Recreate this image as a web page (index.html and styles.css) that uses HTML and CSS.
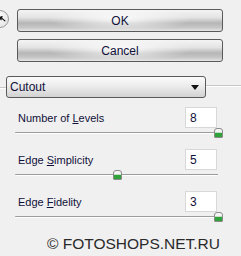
FILE: index.html
```html
<!DOCTYPE html>
<html lang="en">
<head>
  <meta charset="UTF-8">
  <title>Cutout</title>
  <link rel="stylesheet" href="styles.css">
</head>
<body>
  <div class="panel">
    <div class="collapse">
      <svg width="16" height="16" viewBox="0 0 16 16">
        <path d="M3 6 L7 4 L6 5 M3 6 L5 9 M4 5 L11 11" fill="none" stroke="#111" stroke-width="2" stroke-linecap="round"/>
      </svg>
    </div>

    <div class="buttons">
      <button class="btn">OK</button>
      <button class="btn">Cancel</button>
    </div>

    <div class="preset">
      <span class="rule short"></span>
      <div class="select">
        <span>Cutout</span>
        <span class="arrow"></span>
      </div>
      <span class="rule"></span>
    </div>

    <div class="param">
      <div class="param-row">
        <label>Number of <u>L</u>evels</label>
        <input class="field" type="text" value="8">
      </div>
      <div class="slider"><span class="track"></span><span class="thumb" style="left: 100%"></span></div>
    </div>

    <div class="param">
      <div class="param-row">
        <label>Edge <u>S</u>implicity</label>
        <input class="field" type="text" value="5">
      </div>
      <div class="slider"><span class="track"></span><span class="thumb" style="left: 50%"></span></div>
    </div>

    <div class="param">
      <div class="param-row">
        <label>Edge <u>F</u>idelity</label>
        <input class="field" type="text" value="3">
      </div>
      <div class="slider"><span class="track"></span><span class="thumb" style="left: 100%"></span></div>
    </div>

    <div class="watermark">© FOTOSHOPS.NET.RU</div>
  </div>
</body>
</html>
```

FILE: styles.css
```css
/* filter gallery side panel */
body {
  margin: 0;
  background: #f0f0f0;
  font-family: 'Liberation Sans', Arial, sans-serif;
  font-size: 12px;
  color: #10103a;
  width: 241px;
  height: 256px;
  overflow: hidden;
}

.panel {
  position: relative;
  padding-top: 9px;
}

.collapse {
  position: absolute;
  left: -9px;
  top: 10px;
  width: 16px;
  height: 16px;
  border: 1px solid #9a9a9a;
  border-radius: 50%;
  background: radial-gradient(circle at 40% 35%, #ffffff, #dedede);
  display: flex;
  align-items: center;
  justify-content: flex-end;
}

.collapse svg {
  width: 10px;
  height: 10px;
}

.buttons {
  display: flex;
  flex-direction: column;
  gap: 7px;
  margin-left: 17px;
  width: 206px;
}

.btn {
  height: 23px;
  border: 1px solid #5a5a5a;
  border-radius: 3px;
  font-family: 'Liberation Sans', Arial, sans-serif;
  font-size: 12px;
  color: #10103a;
  padding: 0;
  background:
    radial-gradient(ellipse 35% 60% at 50% 45%, rgba(255, 255, 255, 0.85), rgba(255, 255, 255, 0)),
    linear-gradient(#f4f4f4 0%, #e4e4e4 35%, #b6b6b6 62%, #c8c8c8 85%, #e6e6e6 100%);
}

.preset {
  display: flex;
  align-items: center;
  margin-top: 14px;
}

.rule {
  flex: 1;
  height: 1px;
  background: #c8c8c8;
  border-bottom: 1px solid #ffffff;
  margin-top: -2px;
}

.rule.short {
  flex: 0 0 6px;
  margin-top: 2px;
}

.select {
  width: 200px;
  height: 22px;
  border: 1px solid #5a5a5a;
  border-radius: 3px;
  display: flex;
  align-items: center;
  justify-content: space-between;
  padding: 0 6px 0 3px;
  box-sizing: border-box;
  background: linear-gradient(#fbfbfb 0%, #ececec 45%, #d2d2d2 100%);
}

.arrow {
  width: 0;
  height: 0;
  border-left: 4px solid transparent;
  border-right: 4px solid transparent;
  border-top: 5px solid #111;
}

.param {
  margin: 9px 24px 0 15px;
}

.param + .param {
  margin-top: 11px;
}

.param-row {
  display: flex;
  align-items: center;
  justify-content: space-between;
  padding-left: 3px;
}

.param-row label {
  font-size: 11px;
}

.field {
  width: 32px;
  height: 21px;
  box-sizing: border-box;
  border: 1px solid #d8d8d8;
  background: #fff;
  font-family: 'Liberation Sans', Arial, sans-serif;
  font-size: 12px;
  color: #10103a;
  padding: 0 4px;
}

.slider {
  position: relative;
  height: 10px;
  margin-right: -1px;
}

.track {
  display: block;
  position: relative;
  top: 4px;
  height: 1px;
  background: #9c9c9c;
  border-bottom: 1px solid #ffffff;
  border-radius: 2px 0 0 2px;
}

.thumb {
  position: absolute;
  top: 0;
  width: 7px;
  height: 8px;
  margin-left: -4px;
  border: 1px solid #8a8a8a;
  border-radius: 3px 3px 1px 1px;
  background: linear-gradient(#f4f4f4 0%, #f4f4f4 40%, #2fa23a 55%, #2fa23a 100%);
}

.watermark {
  margin-top: 13px;
  text-align: right;
  padding-right: 21px;
  font-size: 15.5px;
  color: #2a2a2a;
}
```
